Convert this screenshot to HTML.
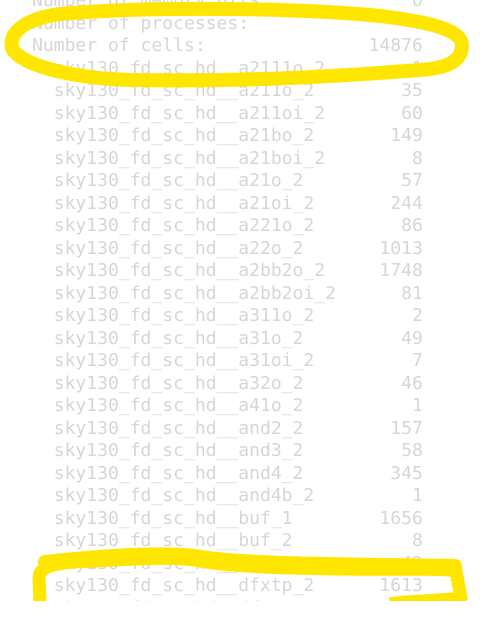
<!DOCTYPE html>
<html><head><style>
html,body{margin:0;padding:0;background:#fff;width:502px;height:630px;overflow:hidden}
pre{position:absolute;left:32px;top:-10px;margin:0;font-family:"DejaVu Sans Mono","Liberation Mono",monospace;font-size:18.05px;line-height:22.5px;color:#d6d6d6}
svg{position:absolute;left:0;top:0}
.cut{position:absolute;left:0;top:601px;width:502px;height:29px;background:#fff}
</style></head><body>
<pre>Number of memory bits:             0
Number of processes:               0
Number of cells:               14876
  sky130_fd_sc_hd__a2111o_2        1
  sky130_fd_sc_hd__a211o_2        35
  sky130_fd_sc_hd__a211oi_2       60
  sky130_fd_sc_hd__a21bo_2       149
  sky130_fd_sc_hd__a21boi_2        8
  sky130_fd_sc_hd__a21o_2         57
  sky130_fd_sc_hd__a21oi_2       244
  sky130_fd_sc_hd__a221o_2        86
  sky130_fd_sc_hd__a22o_2       1013
  sky130_fd_sc_hd__a2bb2o_2     1748
  sky130_fd_sc_hd__a2bb2oi_2      81
  sky130_fd_sc_hd__a311o_2         2
  sky130_fd_sc_hd__a31o_2         49
  sky130_fd_sc_hd__a31oi_2         7
  sky130_fd_sc_hd__a32o_2         46
  sky130_fd_sc_hd__a41o_2          1
  sky130_fd_sc_hd__and2_2        157
  sky130_fd_sc_hd__and3_2         58
  sky130_fd_sc_hd__and4_2        345
  sky130_fd_sc_hd__and4b_2         1
  sky130_fd_sc_hd__buf_1        1656
  sky130_fd_sc_hd__buf_2           8
  sky130_fd_sc_hd__conb_1         42
  sky130_fd_sc_hd__dfxtp_2      1613
  sky130_fd_sc_hd__dfxtp_4        12</pre>
<svg width="502" height="630" viewBox="0 0 502 630">
<path d="M60,14 C150,6 300,8 380,16 C430,22 462,30 462,45 C462,60 450,68 420,70 C340,76 250,82 130,80 C70,78 20,65 12,48 C8,30 30,18 60,14 Z" fill="none" stroke="#ffe600" stroke-width="14" stroke-linejoin="round"/>
<path d="M40,604 L39,578 C39,566 55,562 95,561 C150,558 180,557 200,561 C240,568 300,568 340,569 C400,570 440,568 456,571 L461,598 C430,602 410,600 390,604" fill="none" stroke="#ffe600" stroke-width="13" stroke-linejoin="round"/>
<path d="M45,562 C100,556 160,552 195,556 C240,564 320,564 455,566" fill="none" stroke="#ffe600" stroke-width="14" stroke-linecap="round"/>
</svg>
<div class="cut"></div>
</body></html>
